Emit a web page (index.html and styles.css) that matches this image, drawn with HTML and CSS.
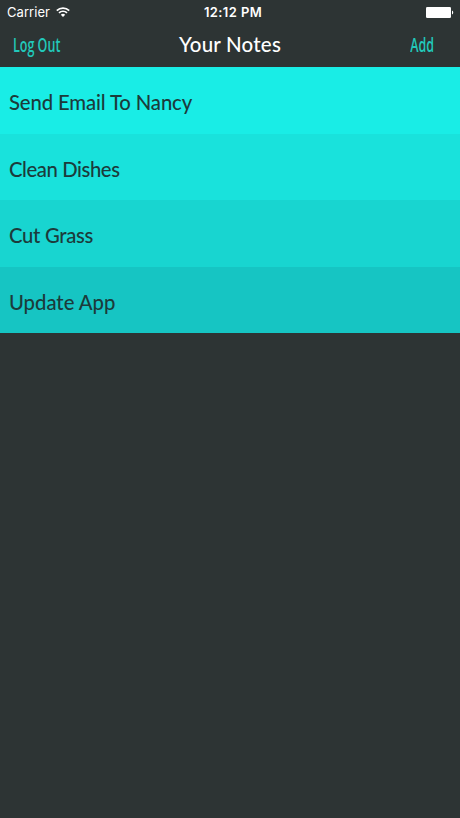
FILE: index.html
```html
<!DOCTYPE html>
<html lang="en">
<head>
<meta charset="utf-8">
<title>Your Notes</title>
<link rel="stylesheet" href="styles.css">
</head>
<body>
<header class="header">
  <div class="status">
    <div class="network">
      <span class="carrier">Carrier</span>
      <svg class="wifi" viewBox="0 0 14 10" width="14" height="10" fill="none" stroke="#fff">
        <path d="M.8 3.6a8.8 8.8 0 0 1 12.4 0M3 5.9a5.7 5.7 0 0 1 8 0" stroke-width="1.7"/>
        <path d="M7 10 4.8 7.8a3.1 3.1 0 0 1 4.4 0Z" fill="#fff" stroke="none"/>
      </svg>
    </div>
    <span class="time">12:12 PM</span>
    <svg class="battery" viewBox="0 0 28 11" width="28" height="11" fill="#fff">
      <rect width="25" height="11" rx="1.3"/>
      <path d="M26 3.5c1.7.6 1.7 3.4 0 4Z"/>
    </svg>
  </div>
  <nav class="nav">
    <a class="action"><span class="narrow">Log Out</span></a>
    <h1 class="title">Your Notes</h1>
    <a class="action action-end"><span class="narrow narrow-end">Add</span></a>
  </nav>
</header>
<ul class="notes">
  <li class="note note-1">Send Email To Nancy</li>
  <li class="note note-2">Clean Dishes</li>
  <li class="note note-3">Cut Grass</li>
  <li class="note note-4">Update App</li>
</ul>
</body>
</html>
```

FILE: styles.css
```css
* { box-sizing: border-box; }
body {
  margin: 0;
  min-height: 818px;
  background: #2d3434;
  font-family: Lato, "Liberation Sans", sans-serif;
}
.header { height: 67px; color: #fff; }
.status {
  display: grid;
  grid-template-columns: 1fr auto 1fr;
  align-items: center;
  height: 24px;
  padding: 0 6px 0 7px;
  font: 13px/24px Inter, sans-serif;
}
.network { display: flex; align-items: center; gap: 6px; }
.carrier { letter-spacing: .05px; }
.time { font-weight: 600; letter-spacing: .4px; padding-left: 5px; }
.battery { justify-self: end; }
.nav {
  display: grid;
  grid-template-columns: 1fr auto 1fr;
  align-items: center;
  height: 43px;
  padding: 0 26px 0 13px;
}
.title {
  margin: 0;
  padding: 0 0 2px 13px;
  font-size: 20.5px;
  line-height: 39px;
  font-weight: 500;
  letter-spacing: .2px;
}
.action {
  padding-bottom: 2px;
  color: #22c8ba;
  font: 600 20.5px/39px "Open Sans", sans-serif;
  white-space: nowrap;
}
.action-end { text-align: right; }
.narrow { display: inline-block; transform: scaleX(.61); transform-origin: left; }
.narrow-end { transform-origin: right; }
.notes { margin: 0; padding: 0; list-style: none; }
.note {
  height: 66.6px;
  padding: 2px 9px 0;
  line-height: 66px;
  font-size: 20.3px;
  font-weight: 500;
  color: #1c3b3b;
}
.note-1 { background: #19ede6; letter-spacing: -.12px; }
.note-2 { background: #19e2dc; letter-spacing: -.42px; }
.note-3 { background: #18d5d0; letter-spacing: -.3px; }
.note-4 { background: #16c5c3; letter-spacing: -.02px; }
```
